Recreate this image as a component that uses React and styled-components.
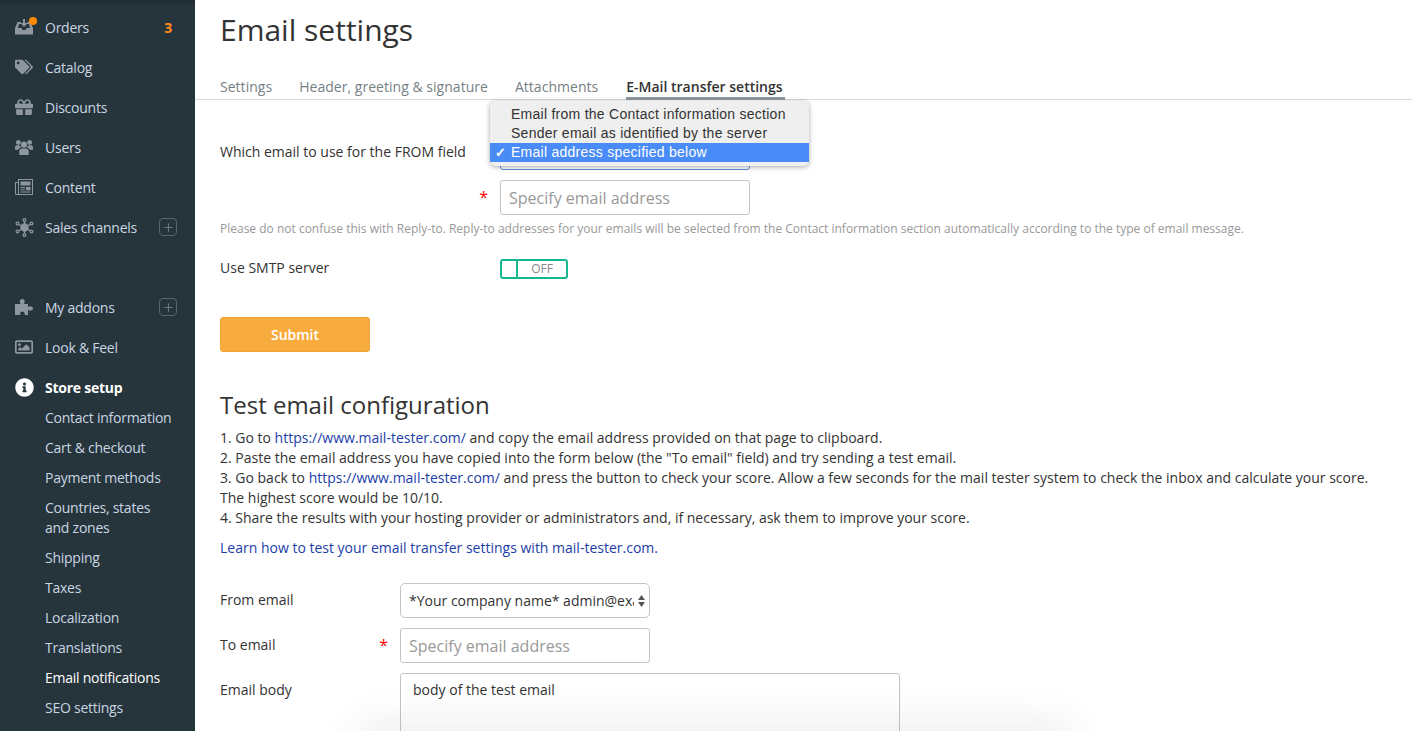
import React from 'react';
import styled, { createGlobalStyle } from 'styled-components';
import { FaTags, FaGift, FaRegImage, FaInfoCircle } from 'react-icons/fa';
import { Plus } from 'lucide-react';

const Global = createGlobalStyle`
  html, body { margin: 0; padding: 0; height: 731px; overflow: hidden; background: #fff; }
  body { font-family: "Open Sans", "Liberation Sans", sans-serif; color: #333; font-size: 14px; }
  * { box-sizing: border-box; }
`;
const Page = styled.div`display: flex; height: 731px; overflow: hidden; position: relative;`;
const Sidebar = styled.nav`
  width: 195px; flex: none; background: #26343c; color: #c9d6e2; padding-top: 7px;
  background-image: linear-gradient(#1f2c33, #26343c 8px);
  display: flex; flex-direction: column;
`;
const MenuGroup = styled.div`display: flex; flex-direction: column; margin-bottom: ${p => p.$gap || 0}px;`;
const MenuItem = styled.div`
  height: 40px; display: flex; align-items: center; position: relative; padding: 0 18px 0 15px;
  font-size: 14px; letter-spacing: -0.25px; font-weight: ${p => p.$active ? 700 : 400}; color: ${p => p.$active ? '#fff' : '#c9d6e2'};
`;
const MenuIcon = styled.span`
  width: 30px; flex: none; display: flex; align-items: center; position: relative;
  color: ${p => p.$active ? '#fff' : '#8e979d'}; font-size: 18px;
`;
const Dot = styled.span`position: absolute; left: 14px; top: -2px; width: 8px; height: 8px; border-radius: 50%; background: #ff8a00;`;
const Label = styled.span`flex: 1;`;
const Badge = styled.span`color: #ff8a1e; font-weight: 700; font-size: 14px; margin-right: 5px;`;
const AddBox = styled.span`
  width: 18px; height: 18px; border: 1px solid #5b676e; border-radius: 4px; color: #6d787e;
  display: flex; align-items: center; justify-content: center;
`;
const SubMenu = styled.div`display: flex; flex-direction: column; padding: 0 0 0 45px; margin-top: -4px;`;
const SubItem = styled.div`
  padding: 5px 0; line-height: 20px; font-size: 14px; letter-spacing: -0.25px; color: ${p => p.$active ? '#fff' : '#c9d6e2'};
`;
const Main = styled.main`flex: 1; padding: 9px 0 0 0; min-width: 0;`;
const Title = styled.h1`font-size: 30px; font-weight: 400; line-height: 42px; margin: 0 0 0 25px; color: #333;`;
const Tabs = styled.div`
  display: flex; gap: 27px; margin-top: 22px; padding-left: 25px; height: 27px; border-bottom: 1px solid #d9d9d9;
`;
const Tab = styled.div`
  font-size: 14px; line-height: 28px; height: 27px; letter-spacing: ${p => p.$active ? 0 : 0.03}px; color: ${p => p.$active ? '#333' : '#767f85'};
  font-weight: ${p => p.$active ? 600 : 400};
  border-bottom: ${p => p.$active ? '3px solid #8f979c' : 'none'};
  padding-right: ${p => p.$active ? 2 : 0}px;
  margin-left: ${p => p.$active ? 1 : 0}px;
`;
const Content = styled.div`padding: 0 25px; position: relative; display: flow-root;`;
const Row = styled.div`display: flex; align-items: ${p => p.$top ? 'flex-start' : 'center'}; height: ${p => p.$h}px; margin-top: ${p => p.$mt || 0}px;`;
const FieldLabel = styled.label`
  width: ${p => p.$w}px; flex: none; font-size: 14px; line-height: 20px; min-height: 20px; color: #333; position: relative;
  margin-bottom: 2px; padding-top: ${p => p.$pt || 0}px;
`;
const Star = styled.span`position: absolute; right: 12px; top: 0; color: #f00; font-size: 16px;`;
const Input = styled.div`
  width: ${p => p.$w}px; height: 35px; border: 1px solid #c4c4c4; border-radius: 3px; background: #fff;
  display: flex; align-items: center; padding: 0 8px; font-size: 16px; color: #999;
`;
const SelectBox = styled.div`
  width: 250px; height: 35px; border: 1px solid #c4c4c4; border-radius: 5px; background: #fff;
  display: flex; align-items: center; padding: 0 0 0 8px; font-size: 14px; color: #333; position: relative; overflow: hidden;
`;
const SelectText = styled.span`white-space: nowrap; overflow: hidden; width: 225px; font-size: 14px;`;
const Arrows = styled.svg`position: absolute; right: 3px; top: 10px; background: #fff;`;
const BehindSelect = styled.div`
  width: 250px; height: 35px; border: 1px solid #5b8fd8; border-radius: 3px; background: #fff;
`;
const Menu = styled.div`
  position: absolute; left: 295px; top: 1px; width: 319px; height: 65px; background: #efefef; border-radius: 5px;
  box-shadow: 0 1px 5px rgba(0,0,0,.35); padding-top: 4px; font-family: "Liberation Sans", Arial, sans-serif; z-index: 3;
`;
const MenuOption = styled.div`
  height: 19px; line-height: 19px; padding-left: 21px; font-size: 14px; position: relative; letter-spacing: 0.26px;
  background: ${p => p.$sel ? '#4a8cf7' : 'transparent'}; color: ${p => p.$sel ? '#fff' : '#333'};
`;
const Check = styled.span`position: absolute; left: 5px; top: 0; font-size: 13px; font-weight: 700;`;
const Hint = styled.p`margin: 6px 0 0; font-size: 12px; line-height: 16px; color: #999;`;
const Toggle = styled.div`
  width: 68px; height: 20px; border: 2px solid #17b890; border-radius: 3px; display: flex; font-size: 12px; color: #888;
`;
const Knob = styled.span`width: 16px; border-right: 2px solid #17b890; flex: none;`;
const ToggleText = styled.span`flex: 1; text-align: center; line-height: 16px;`;
const Submit = styled.button`
  display: block; width: 150px; height: 35px; margin-top: 38px; background: #f8ac3e; border: 1px solid #f0a336; border-radius: 3px;
  color: #fff; font: 600 14px "Open Sans", sans-serif;
`;
const H2 = styled.h2`font-size: 24px; font-weight: 400; line-height: 32px; margin: 37px 0 0; color: #333;`;
const Steps = styled.div`font-size: 14px; line-height: 20px; margin-top: 7px; color: #333;`;
const A = styled.a`color: #1b3ea8; text-decoration: none;`;
const Learn = styled.p`margin: 10px 0 0; line-height: 20px; font-size: 14px;`;
const Textarea = styled.div`
  width: 500px; height: 100px; border: 1px solid #c4c4c4; border-radius: 3px; padding: 6px 12px; font-size: 14px; line-height: 20px; color: #333;
`;
const BottomShade = styled.div`
  position: absolute; left: 375px; top: 738px; width: 680px; height: 10px; box-shadow: 0 0 40px 18px rgba(0,0,0,.065); z-index: 5; pointer-events: none;
`;

const OrdersIcon = () => (
  <svg width="18" height="16" viewBox="0 0 18 16" fill="currentColor">
    <path d="M2.5 3H6v2H4L3 9h3.5l1 2h3l1-2H15l-1-4h-2V3h3.5L18 9v6.5H0V9z" />
    <path d="M8 0h2v4h2.5L9 8 5.5 4H8z" />
  </svg>
);
const HubIcon = () => (
  <svg width="19" height="19" viewBox="0 0 19 19" fill="none" stroke="currentColor" strokeWidth="1.2">
    <circle cx="9.5" cy="9.5" r="3.6" fill="currentColor" />
    <circle cx="9.5" cy="2" r="1.4" /><circle cx="9.5" cy="17" r="1.4" />
    <circle cx="2.5" cy="5.5" r="1.4" /><circle cx="16.5" cy="5.5" r="1.4" />
    <circle cx="2.5" cy="13.5" r="1.4" /><circle cx="16.5" cy="13.5" r="1.4" />
    <path d="M9.5 3.4v6M9.5 15.6v-6M3.7 6.2l5.8 3.3M15.3 6.2 9.5 9.5M3.7 12.8l5.8-3.3M15.3 12.8 9.5 9.5" />
  </svg>
);
const UsersIcon = () => (
  <svg width="18" height="16" viewBox="0 0 18 16" fill="currentColor">
    <circle cx="9" cy="5.6" r="3.2" />
    <circle cx="3.3" cy="3.4" r="2.4" />
    <circle cx="14.7" cy="3.4" r="2.4" />
    <path d="M4.2 16v-3.6c0-1.9 1.2-2.9 2.7-2.9h4.2c1.5 0 2.7 1 2.7 2.9V16z" />
    <path d="M0 10.6V8.2C0 6.9.9 6.2 2 6.2h2.6c.3 1 .9 1.8 1.6 2.4-1.8.4-2.8 1.2-3.2 2.4zM18 10.6V8.2c0-1.3-.9-2-2-2h-2.6c-.3 1-.9 1.8-1.6 2.4 1.8.4 2.8 1.2 3.2 2.4z" />
  </svg>
);
const NewsIcon = () => (
  <svg width="18" height="16" viewBox="0 0 18 16" fill="currentColor">
    <path fillRule="evenodd" d="M3 0h15v16H1.5A1.5 1.5 0 0 1 0 14.5V3h3zm1 1v13.5c0 .3-.1.5-.2.5H17V1zM1 4v10.5c0 .3.2.5.5.5h1c.3 0 .5-.2.5-.5V4z" />
    <path d="M5.5 2.5h10v4h-10zM5.5 8h4.5v1h-4.5zM5.5 10.2h4.5v1h-4.5zM5.5 12.4h10v1h-10zM11 8h4.5v3.2H11z" />
  </svg>
);
const PuzzleIcon = () => (
  <svg width="18" height="16" viewBox="0 0 18 16" fill="currentColor">
    <path d="M0 5h5.2c.3 0 .4-.3.2-.6C5 3.8 4.8 3.2 4.8 2.5 4.8 1 6 0 7.3 0s2.4 1 2.4 2.5c0 .7-.2 1.3-.6 1.9-.2.3-.1.6.2.6H13v2.6c0 .3.3.4.6.2.5-.4 1-.6 1.7-.6 1.5 0 2.7 1 2.7 2.2s-1.2 2.2-2.7 2.2c-.7 0-1.2-.2-1.7-.6-.3-.2-.6-.1-.6.2V16H9.6v-1.4C9.6 13.5 8.6 12.6 7.4 12.6S5.2 13.5 5.2 14.6V16H0z" />
  </svg>
);

const Item = ({ icon, children, right, active }) => (
  <MenuItem $active={active}>
    <MenuIcon $active={active}>{icon}</MenuIcon>
    <Label>{children}</Label>
    {right}
  </MenuItem>
);

const Add = () => <AddBox><Plus size={13} strokeWidth={2} /></AddBox>;

export default function App() {
  return (
    <Page>
      <Global />
      <Sidebar>
        <MenuGroup $gap={40}>
          <Item icon={<><OrdersIcon /><Dot /></>} right={<Badge>3</Badge>}>Orders</Item>
          <Item icon={<FaTags />}>Catalog</Item>
          <Item icon={<FaGift />}>Discounts</Item>
          <Item icon={<UsersIcon />}>Users</Item>
          <Item icon={<NewsIcon />}>Content</Item>
          <Item icon={<HubIcon />} right={<Add />}>Sales channels</Item>
        </MenuGroup>
        <MenuGroup>
          <Item icon={<PuzzleIcon />} right={<Add />}>My addons</Item>
          <Item icon={<FaRegImage />}>Look &amp; Feel</Item>
          <Item active icon={<FaInfoCircle size={19} />}>Store setup</Item>
        </MenuGroup>
        <SubMenu>
          <SubItem>Contact information</SubItem>
          <SubItem>Cart &amp; checkout</SubItem>
          <SubItem>Payment methods</SubItem>
          <SubItem>Countries, states<br />and zones</SubItem>
          <SubItem>Shipping</SubItem>
          <SubItem>Taxes</SubItem>
          <SubItem>Localization</SubItem>
          <SubItem>Translations</SubItem>
          <SubItem $active>Email notifications</SubItem>
          <SubItem>SEO settings</SubItem>
        </SubMenu>
      </Sidebar>
      <Main>
        <Title>Email settings</Title>
        <Tabs>
          <Tab>Settings</Tab>
          <Tab>Header, greeting &amp; signature</Tab>
          <Tab>Attachments</Tab>
          <Tab $active>E-Mail transfer settings</Tab>
        </Tabs>
        <Content>
          <Menu>
            <MenuOption>Email from the Contact information section</MenuOption>
            <MenuOption>Sender email as identified by the server</MenuOption>
            <MenuOption $sel><Check>✓</Check>Email address specified below</MenuOption>
          </Menu>
          <Row $h={35} $mt={35}>
            <FieldLabel $w={280}>Which email to use for the FROM field</FieldLabel>
            <BehindSelect />
          </Row>
          <Row $h={35} $mt={10}>
            <FieldLabel $w={280}><Star>*</Star></FieldLabel>
            <Input $w={250}>Specify email address</Input>
          </Row>
          <Hint>Please do not confuse this with Reply-to. Reply-to addresses for your emails will be selected from the Contact information section automatically according to the type of email message.</Hint>
          <Row $h={20} $mt={22}>
            <FieldLabel $w={280}>Use SMTP server</FieldLabel>
            <Toggle><Knob /><ToggleText>OFF</ToggleText></Toggle>
          </Row>
          <Submit>Submit</Submit>
          <H2>Test email configuration</H2>
          <Steps>
            1. Go to <A>https://www.mail-tester.com/</A> and copy the email address provided on that page to clipboard.<br />
            2. Paste the email address you have copied into the form below (the "To email" field) and try sending a test email.<br />
            3. Go back to <A>https://www.mail-tester.com/</A> and press the button to check your score. Allow a few seconds for the mail tester system to check the inbox and calculate your score.<br />
            The highest score would be 10/10.<br />
            4. Share the results with your hosting provider or administrators and, if necessary, ask them to improve your score.
          </Steps>
          <Learn><A>Learn how to test your email transfer settings with mail-tester.com.</A></Learn>
          <Row $h={35} $mt={25}>
            <FieldLabel $w={180}>From email</FieldLabel>
            <SelectBox>
              <SelectText>*Your company name* admin@example.com</SelectText>
              <Arrows width="9" height="14" viewBox="0 0 9 14" fill="#555"><path d="M4.5 1 8 6H1zM4.5 13 1 8h7z" /></Arrows>
            </SelectBox>
          </Row>
          <Row $h={35} $mt={10}>
            <FieldLabel $w={180}>To email<Star>*</Star></FieldLabel>
            <Input $w={250}>Specify email address</Input>
          </Row>
          <Row $h={100} $mt={10} $top>
            <FieldLabel $w={180} $pt={7}>Email body</FieldLabel>
            <Textarea>body of the test email</Textarea>
          </Row>
        </Content>
      </Main>
      <BottomShade />
    </Page>
  );
}
